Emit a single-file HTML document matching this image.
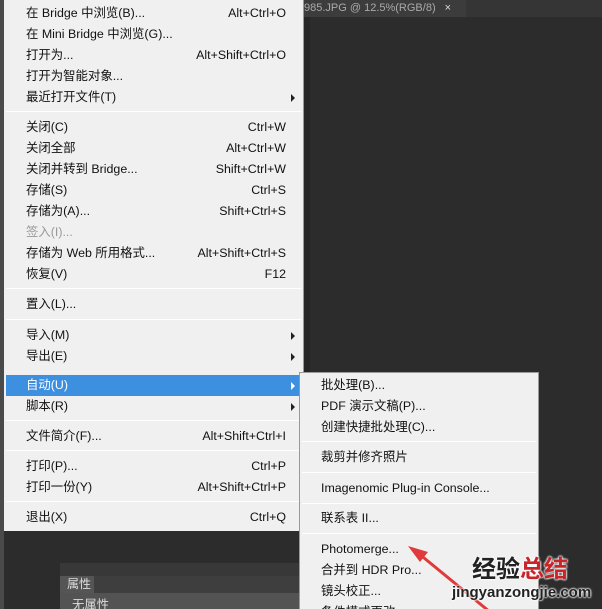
<!DOCTYPE html>
<html><head><meta charset="utf-8"><style>
*{margin:0;padding:0;box-sizing:border-box}
html,body{width:602px;height:609px;overflow:hidden}
body{background:#2c2c2c;position:relative;font-family:"Liberation Sans","Noto Sans CJK SC",sans-serif;font-size:12.4px;color:#111}
.abs{position:absolute}
.it{position:absolute;left:0;right:0;height:21px;line-height:21px;padding-left:22px;white-space:nowrap}
.it .k{position:absolute;right:17px;top:0}
.it .ar{position:absolute;right:8px;top:7px;width:0;height:0;border-left:4px solid #222;border-top:4px solid transparent;border-bottom:4px solid transparent}
.sep{position:absolute;left:2px;right:2px;height:1px;background:#a8a8a8;border-bottom:1px solid #fff}
.dis{color:#999}
.sub .it{padding-left:21px}
</style></head><body>
<div class="abs" style="left:0;top:0;width:602px;height:17px;background:#353535"></div>
<div class="abs" style="left:304px;top:0;width:162px;height:17px;background:#3c3c3c;color:#aaa;font-size:11px;line-height:17px">985.JPG @ 12.5%(RGB/8) <span style="margin-left:6px;color:#ddd">×</span></div>
<div class="abs" style="left:0;top:0;width:4px;height:609px;background:#4a4a4a"></div>
<div class="abs" style="left:304px;top:17px;width:6px;height:592px;background:#262626"></div>

<div class="abs" style="left:4px;top:0;width:300px;height:531px;background:#f0f0f0;border-right:1px solid #999">
<div class="it" style="top:3px">在 Bridge 中浏览(B)...<span class="k">Alt+Ctrl+O</span></div>
<div class="it" style="top:24px">在 Mini Bridge 中浏览(G)...</div>
<div class="it" style="top:45px">打开为...<span class="k">Alt+Shift+Ctrl+O</span></div>
<div class="it" style="top:66px">打开为智能对象...</div>
<div class="it" style="top:87px">最近打开文件(T)<span class="ar"></span></div>
<div class="sep" style="top:111px"></div>
<div class="it" style="top:117px">关闭(C)<span class="k">Ctrl+W</span></div>
<div class="it" style="top:138px">关闭全部<span class="k">Alt+Ctrl+W</span></div>
<div class="it" style="top:159px">关闭并转到 Bridge...<span class="k">Shift+Ctrl+W</span></div>
<div class="it" style="top:180px">存储(S)<span class="k">Ctrl+S</span></div>
<div class="it" style="top:201px">存储为(A)...<span class="k">Shift+Ctrl+S</span></div>
<div class="it dis" style="top:222px">签入(I)...</div>
<div class="it" style="top:243px">存储为 Web 所用格式...<span class="k">Alt+Shift+Ctrl+S</span></div>
<div class="it" style="top:264px">恢复(V)<span class="k">F12</span></div>
<div class="sep" style="top:288px"></div>
<div class="it" style="top:294px">置入(L)...</div>
<div class="sep" style="top:319px"></div>
<div class="it" style="top:325px">导入(M)<span class="ar"></span></div>
<div class="it" style="top:346px">导出(E)<span class="ar"></span></div>
<div class="it" style="top:375px;background:#3d8fe0;color:#fff;left:2px;padding-left:20px">自动(U)<span class="ar" style="border-left-color:#fff"></span></div>
<div class="it" style="top:396px">脚本(R)<span class="ar"></span></div>
<div class="sep" style="top:420px"></div>
<div class="it" style="top:426px">文件简介(F)...<span class="k">Alt+Shift+Ctrl+I</span></div>
<div class="sep" style="top:450px"></div>
<div class="it" style="top:456px">打印(P)...<span class="k">Ctrl+P</span></div>
<div class="it" style="top:477px">打印一份(Y)<span class="k">Alt+Shift+Ctrl+P</span></div>
<div class="sep" style="top:501px"></div>
<div class="it" style="top:507px">退出(X)<span class="k">Ctrl+Q</span></div>
</div>

<div class="abs" style="left:60px;top:563px;width:240px;height:13px;background:#383838"></div>
<div class="abs" style="left:60px;top:576px;width:240px;height:17px;background:#3e3e3e"></div>
<div class="abs" style="left:60px;top:576px;width:34px;height:17px;background:#555;color:#ddd;line-height:17px;padding-left:7px;font-size:12px;white-space:nowrap">属性</div>
<div class="abs" style="left:60px;top:593px;width:240px;height:16px;background:#535353;color:#ddd;padding-left:12px;line-height:24px">无属性</div>

<div class="abs sub" style="left:299px;top:372px;width:240px;height:240px;background:#f0f0f0;border:1px solid #999">
<div class="it" style="top:2px">批处理(B)...</div>
<div class="it" style="top:23px">PDF 演示文稿(P)...</div>
<div class="it" style="top:44px">创建快捷批处理(C)...</div>
<div class="sep" style="top:68px"></div>
<div class="it" style="top:74px">裁剪并修齐照片</div>
<div class="sep" style="top:99px"></div>
<div class="it" style="top:105px">Imagenomic Plug-in Console...</div>
<div class="sep" style="top:130px"></div>
<div class="it" style="top:135px">联系表 II...</div>
<div class="sep" style="top:160px"></div>
<div class="it" style="top:166px">Photomerge...</div>
<div class="it" style="top:187px">合并到 HDR Pro...</div>
<div class="it" style="top:208px">镜头校正...</div>
<div class="it" style="top:229px">条件模式更改...</div>
</div>

<svg class="abs" style="left:0;top:0" width="602" height="609">
<line x1="490" y1="612" x2="418" y2="553" stroke="#e03a3a" stroke-width="3"/>
<polygon points="408,546 428,552 420,562" fill="#e03a3a"/>
</svg>
<div class="abs" style="left:472px;top:556px;font-size:24px;font-weight:bold;line-height:28px;color:#222;text-shadow:0 0 2px #fff,0 0 2px #fff,0 0 2px #fff">经验<span style="color:#c8252a">总结</span></div>
<div class="abs" style="left:452px;top:584px;font-size:15px;font-weight:bold;line-height:17px;color:#222;text-shadow:0 0 2px #fff,0 0 2px #fff,0 0 2px #fff">jingyanzongjie.com</div>
</body></html>
